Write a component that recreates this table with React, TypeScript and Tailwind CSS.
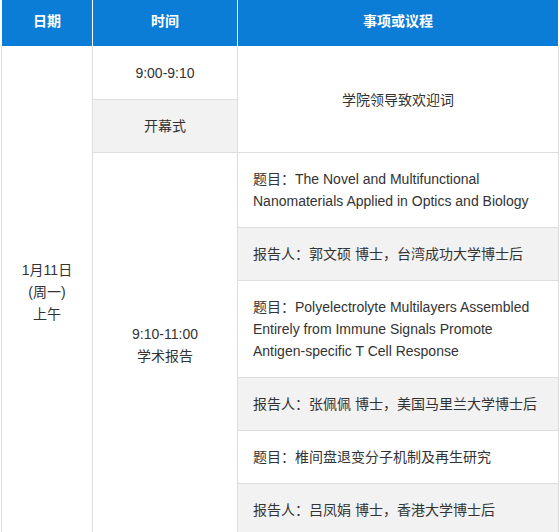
const FONT = "font-['Liberation_Sans','Noto_Sans_CJK_SC',sans-serif]";

const cell = 'border-r border-b border-[#dddddd] px-[15px] py-[15px] leading-[22px]';

export default function App() {
  return (
    <div className={`${FONT} bg-white pl-px text-[14px] text-[#333333]`}>
      <table className="w-[558px] table-fixed border-separate border-spacing-0">
        <thead>
          <tr className="bg-[#0c7dd6] text-white">
            <th className="box-border w-[92px] border-x border-b border-white px-2 pt-[10px] pb-[14px] leading-[22px] font-bold">
              日期
            </th>
            <th className="box-border w-[145px] border-r border-b border-white px-2 pt-[10px] pb-[14px] leading-[22px] font-bold">
              时间
            </th>
            <th className="box-border w-[321px] border-r border-b border-white px-2 pt-[10px] pb-[14px] leading-[22px] font-bold">
              事项或议程
            </th>
          </tr>
        </thead>
        <tbody>
          <tr>
            <td rowSpan={8} className={`${cell} border-l text-center align-middle`}>
              1月11日
              <br />
              (周一)
              <br />
              上午
            </td>
            <td className={`${cell} text-center`}>9:00-9:10</td>
            <td rowSpan={2} className={`${cell} text-center align-middle`}>
              学院领导致欢迎词
            </td>
          </tr>
          <tr>
            <td className={`${cell} bg-[#f2f2f2] text-center`}>开幕式</td>
          </tr>
          <tr>
            <td rowSpan={6} className={`${cell} text-center align-middle`}>
              9:10-11:00
              <br />
              学术报告
            </td>
            <td className={cell}>题目：The Novel and Multifunctional Nanomaterials Applied in Optics and Biology</td>
          </tr>
          <tr>
            <td className={`${cell} bg-[#f2f2f2]`}>报告人：郭文硕 博士，台湾成功大学博士后</td>
          </tr>
          <tr>
            <td className={cell}>
              题目：Polyelectrolyte Multilayers Assembled Entirely from Immune Signals Promote Antigen-specific T Cell
              Response
            </td>
          </tr>
          <tr>
            <td className={`${cell} bg-[#f2f2f2]`}>报告人：张佩佩 博士，美国马里兰大学博士后</td>
          </tr>
          <tr>
            <td className={cell}>题目：椎间盘退变分子机制及再生研究</td>
          </tr>
          <tr>
            <td className={`${cell} bg-[#f2f2f2]`}>报告人：吕凤娟 博士，香港大学博士后</td>
          </tr>
        </tbody>
      </table>
    </div>
  );
}
